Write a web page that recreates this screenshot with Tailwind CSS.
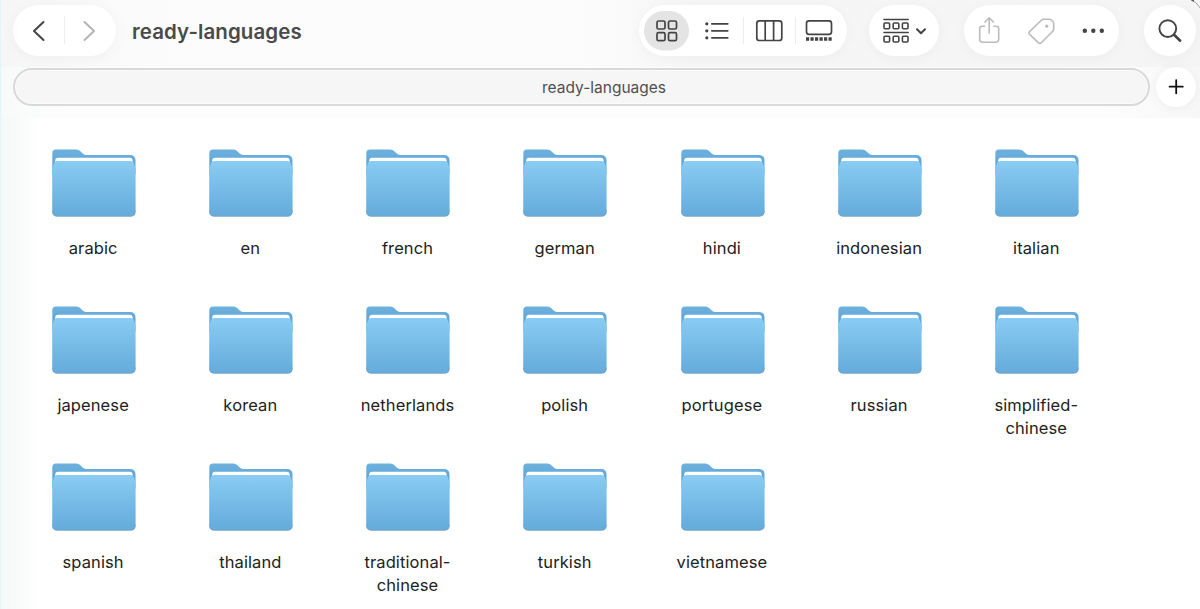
<!DOCTYPE html>
<html lang="en">
<head>
    <meta charset="UTF-8">
    <meta name="viewport" content="width=device-width, initial-scale=1.0">
    <title>ready-languages</title>
    <script src="https://cdn.jsdelivr.net/npm/@tailwindcss/browser@4"></script>
</head>
<body class="h-[609px] overflow-hidden bg-white font-['Inter',sans-serif] text-[#222]">
    <!-- Window -->
    <div class="relative h-full overflow-hidden border-l border-[#e2f6f8] bg-linear-to-r from-[#f5f8f8] to-white to-[40px]">
        <!-- Header -->
        <header class="h-[118px]">
            <!-- Toolbar -->
            <div class="flex h-[67px] items-start bg-[linear-gradient(to_right,#f6f6f6,#fcfcfc_14%,#fcfcfc_48%,#f6f6f6_58%,#f5f5f5)] pt-[5px] pl-3 text-[#444]">
                <div class="flex h-[51px] w-[103px] items-center rounded-full bg-white shadow-[0_2px_14px_rgba(0,0,0,0.04)]">
                    <svg class="h-[51px] w-[103px]" viewBox="0 0 103 51" fill="none" stroke-width="2" stroke-linecap="round" stroke-linejoin="round">
                        <path d="M30.5 17 21 26l9.500 9" stroke="#444" />
                        <path d="M51.500 11v28" stroke="#ededed" stroke-width="1" stroke-linecap="butt" />
                        <path d="M71.500 17 81 26l-9.500 9" stroke="#b5b5b5" />
                    </svg>
                </div>
                <h1 class="ml-4 w-[507px] text-[20.5px] leading-[53px] font-semibold tracking-[0.08px] whitespace-nowrap text-[#4a4a4a]">ready-languages</h1>

                <!-- View modes -->
                <div class="h-[51px] w-[208px] rounded-full bg-white shadow-[0_2px_14px_rgba(0,0,0,0.04)]">
                    <svg class="h-[51px] w-[208px]" viewBox="0 0 208 51" fill="none" stroke="currentColor" stroke-width="1.700">
                        <rect x="5" y="6" width="45" height="39.500" rx="19.700" fill="#e4e4e4" stroke="none" />
                        <rect x="18" y="16" width="8" height="8" rx="1.500" />
                        <rect x="29.500" y="16" width="8" height="8" rx="1.500" />
                        <rect x="18" y="27.700" width="8" height="8" rx="1.500" />
                        <rect x="29.500" y="27.700" width="8" height="8" rx="1.500" />
                        <path d="M72.800 18.800h16M72.800 25.800h16M72.800 32.800h16" stroke-linecap="round" />
                        <g fill="currentColor" stroke="none">
                            <circle cx="67.800" cy="18.800" r="1.600" /><circle cx="67.800" cy="25.800" r="1.600" /><circle cx="67.800" cy="32.800" r="1.600" />
                        </g>
                        <path d="M104.500 12v27M156.500 12v27" stroke="#ececec" stroke-width="1" />
                        <rect x="117.800" y="15.900" width="25" height="19.600" rx="2.500" />
                        <path d="M126.200 16v19.500M134.600 16v19.500" />
                        <rect x="167.500" y="15.900" width="25" height="13.400" rx="2.500" />
                        <path d="M167 34h25.800" stroke-width="3.600" stroke-dasharray="3.200 1.300" />
                    </svg>
                </div>

                <!-- Group by -->
                <div class="ml-[22px] h-[51px] w-[70px] rounded-full bg-white shadow-[0_2px_14px_rgba(0,0,0,0.04)]">
                    <svg class="h-[51px] w-[70px]" viewBox="0 0 70 51" fill="none" stroke="currentColor" stroke-width="1.600">
                        <path d="M15 14.500h24.200M15 27.500h24.200" stroke-linecap="round" />
                        <rect x="15" y="18" width="5.600" height="5.800" rx="1" /><rect x="24.200" y="18" width="5.600" height="5.800" rx="1" /><rect x="33.400" y="18" width="5.600" height="5.800" rx="1" />
                        <rect x="15" y="31.200" width="5.600" height="5.800" rx="1" /><rect x="24.200" y="31.200" width="5.600" height="5.800" rx="1" /><rect x="33.400" y="31.200" width="5.600" height="5.800" rx="1" />
                        <path d="m48 24.300 4 4 4-4" stroke-width="2" stroke-linecap="round" stroke-linejoin="round" />
                    </svg>
                </div>

                <!-- Share, tags, more -->
                <div class="ml-[25px] h-[51px] w-[155px] rounded-full bg-white shadow-[0_2px_14px_rgba(0,0,0,0.04)]">
                    <svg class="h-[51px] w-[155px]" viewBox="0 0 155 51" fill="none" stroke="#bcbcbc" stroke-width="1.600" stroke-linecap="round" stroke-linejoin="round">
                        <path d="M20.500 21.300h-2.300a2.500 2.500 0 0 0-2.500 2.500v10.400a3 3 0 0 0 3 3h13a3 3 0 0 0 3-3V23.800a2.500 2.500 0 0 0-2.500-2.500h-2.300M25.200 28V13M21 17l4.200-4.200 4.200 4.200" />
                        <path d="M65.600 26.600 77 15.500q1.300-1.200 3-1.200h5.400q1.300 0 2.200.9l1.200 1.300q.9.900.9 2.200v4.800q0 1.800-1.200 3L77.300 37.700q-1.500 1.500-3 0l-8.700-8.300q-1.500-1.400 0-2.800Z" />
                        <circle cx="82.700" cy="21.200" r="1.600" fill="#bcbcbc" stroke="none" />
                        <g fill="#444" stroke="none"><circle cx="120.800" cy="25.800" r="2.200" /><circle cx="129.300" cy="25.800" r="2.200" /><circle cx="137.800" cy="25.800" r="2.200" /></g>
                    </svg>
                </div>

                <!-- Search -->
                <div class="ml-[25px] h-[51px] w-[52px] rounded-full bg-white shadow-[0_2px_14px_rgba(0,0,0,0.04)]">
                    <svg class="h-[51px] w-[52px]" viewBox="0 0 52 51" fill="none" stroke="currentColor" stroke-linecap="round">
                        <circle cx="23.800" cy="23.600" r="8.400" stroke-width="1.900" />
                        <path d="m30.300 30 5.900 5.700" stroke-width="2.600" />
                    </svg>
                </div>
            </div>

            <!-- Tab bar -->
            <div class="flex h-[51px] items-start bg-[linear-gradient(to_right,#f8fafa,#fdfdfd_5%,#fdfdfd_92%,#f7f7f7)] pl-3">
                <div class="mt-px h-[38px] w-[1137px] rounded-full border-2 border-[#d9d9d9] bg-[#f6f6f6] pl-[45px] text-center text-[15.500px] leading-[35px] text-[#505050] shadow-[inset_0_0_0_1px_#fbfbfb]">
                    ready-languages
                </div>
                <button class="ml-1.5 h-10 w-10 rounded-full bg-white shadow-[0_1px_12px_rgba(0,0,0,0.05)]" aria-label="New tab">
                    <svg class="h-10 w-10" viewBox="0 0 40 40" fill="none" stroke="#111" stroke-width="1.800" stroke-linecap="round"><path d="M13.600 19.700h13.200M20.200 13.100v13.200" /></svg>
                </button>
            </div>
        </header>

        <!-- Window corner -->
        <svg class="absolute top-0 right-0 h-3 w-3" viewBox="0 0 12 12"><path d="M3 0Q9 2 12 8" fill="none" stroke="#aaa" /><path d="M3 0h3v2Z" fill="#555" /></svg>

        <!-- Folders -->
        <main id="folders" class="grid auto-rows-[157.200px] grid-cols-[repeat(7,157.200px)] pt-[31px] pl-[14.300px]"></main>
    </div>

    <template id="folder">
        <div class="flex flex-col items-center">
            <svg class="h-[69px] w-[86px]" viewBox="0 0 86 69">
                <path d="M1.300 10V4.200Q1.300.5 5 .5h20.500q2.200 0 3.600 1.500l2.600 2.600q1.300 1.400 3.300 1.400H79q5.500 0 5.500 5.500v14H1.300Z" fill="url(#back)" />
                <path d="M4.200 15v-3.200q0-3 3-3h71.400q3 0 3 3V15Z" fill="#fff" />
                <path d="M1.200 19q.8-1.400 1.600-4.200Q3.600 12 6.400 12h73q2.800 0 3.600 2.800.8 2.800 1.600 4.200v43.500q0 5-5 5H6.200q-5 0-5-5Z" fill="url(#front)" />
                <path d="M1.700 61.500q0 5.500 4.500 5.500h73.400q4.500 0 4.500-5.500" fill="none" stroke="#76a5ca" stroke-width="1" />
            </svg>
            <p class="mt-[18.900px] mr-[1.500px] text-center text-[16.500px] leading-[22.600px] tracking-[0.1px] whitespace-pre-line"></p>
        </div>
    </template>

    <svg class="absolute h-0 w-0">
        <defs>
            <linearGradient id="back" x1="0" y1="0" x2="0" y2="1"><stop stop-color="#6db1de" /><stop offset="1" stop-color="#569fd0" /></linearGradient>
            <linearGradient id="front" x1="0" y1="0" x2="0" y2="1"><stop stop-color="#89ccf3" /><stop offset="1" stop-color="#64abdb" /></linearGradient>
        </defs>
    </svg>

    <script>
        const names = [
            'arabic', 'en', 'french', 'german', 'hindi', 'indonesian', 'italian',
            'japenese', 'korean', 'netherlands', 'polish', 'portugese', 'russian', 'simplified-\nchinese',
            'spanish', 'thailand', 'traditional-\nchinese', 'turkish', 'vietnamese'
        ];
        const folders = document.getElementById('folders');
        const template = document.getElementById('folder');
        names.forEach(name => {
            const item = template.content.cloneNode(true);
            item.querySelector('p').textContent = name;
            folders.appendChild(item);
        });
    </script>
</body>
</html>
